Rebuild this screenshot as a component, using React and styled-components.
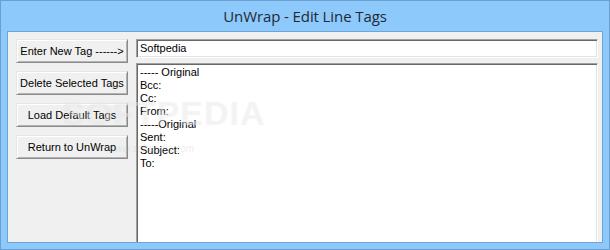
import React from "react";
import styled, { createGlobalStyle } from "styled-components";

const Global = createGlobalStyle`
  html, body { margin: 0; padding: 0; background: #8cc8f9; }
  * { box-sizing: border-box; }
`;

const Window = styled.div`
  width: 610px;
  height: 250px;
  border: 1px solid #6b9fd1;
  background: #8dc9fa;
  display: flex;
  flex-direction: column;
  padding: 0 6px 6px 6px;
`;

const TitleBar = styled.div`
  height: 30px;
  display: flex;
  align-items: center;
  justify-content: center;
  font-family: "Open Sans", "Noto Sans", sans-serif;
  font-size: 15px;
  color: #1f2a36;
  padding-bottom: 1px;
  letter-spacing: -0.1px;
`;

const Client = styled.div`
  position: relative;
  flex: 1;
  border: 1px solid #6ea4d8;
  background: #f0f0f0;
  display: flex;
  gap: 8px;
  padding: 7px 4px 0 8px;
  overflow: hidden;
  font-family: "Liberation Sans", Arial, sans-serif;
  font-size: 11px;
  color: #000;
`;

const ButtonColumn = styled.div`
  width: 112px;
  display: flex;
  flex-direction: column;
  gap: 8px;
`;

const Button = styled.div`
  height: 24px;
  display: flex;
  align-items: center;
  justify-content: center;
  background: #f0f0f0;
  border: 1px solid;
  border-color: #e6e6e6 #8a8a8a #8a8a8a #e6e6e6;
  box-shadow: inset 1px 1px 0 #ffffff, inset -1px -1px 0 #b4b4b4;
  white-space: nowrap;
  padding-bottom: 1px;
`;

const EditColumn = styled.div`
  flex: 1;
  display: flex;
  flex-direction: column;
  gap: 5px;
`;

const Sunken = styled.div`
  background: #fff;
  border: 1px solid;
  border-color: #a0a0a0 #ffffff #ffffff #a0a0a0;
  box-shadow: inset 1px 1px 0 #696969, inset -1px 0 0 #e3e3e3;
`;

const Input = styled(Sunken)`
  height: 19px;
  padding: 2px 3px 0 3px;
  line-height: 13px;
  box-shadow: inset 1px 1px 0 #696969, inset -1px -1px 0 #e3e3e3;
`;

const List = styled(Sunken)`
  flex: 1;
  border-bottom: none;
  padding: 2px 3px 0 3px;
  line-height: 13px;
`;

const Line = styled.div`
  white-space: pre;
`;

const Watermark = styled.div`
  position: absolute;
  left: 54px;
  top: 62px;
  font-family: "Liberation Sans", Arial, sans-serif;
  font-weight: bold;
  font-size: 34px;
  letter-spacing: 1px;
  color: rgba(255, 255, 255, 0.35);
  text-shadow: 0 0 1px rgba(160, 160, 160, 0.18);
  pointer-events: none;
`;

const WatermarkUrl = styled.div`
  position: absolute;
  left: 100px;
  top: 111px;
  font-family: "Liberation Sans", Arial, sans-serif;
  font-size: 10px;
  font-style: italic;
  color: rgba(170, 170, 170, 0.22);
  pointer-events: none;
`;

const buttons = [
  "Enter New Tag ------>",
  "Delete Selected Tags",
  "Load Default Tags",
  "Return to UnWrap",
];

const tags = [
  "----- Original",
  "Bcc:",
  "Cc:",
  "From:",
  "-----Original",
  "Sent:",
  "Subject:",
  "To:",
];

export default function App() {
  return (
    <>
      <Global />
      <Window>
        <TitleBar>UnWrap - Edit Line Tags</TitleBar>
        <Client>
          <ButtonColumn>
            {buttons.map((b) => (
              <Button key={b}>{b}</Button>
            ))}
          </ButtonColumn>
          <EditColumn>
            <Input>Softpedia</Input>
            <List>
              {tags.map((t, i) => (
                <Line key={i}>{t}</Line>
              ))}
            </List>
          </EditColumn>
          <Watermark>SOFTPEDIA</Watermark>
          <WatermarkUrl>www.softpedia.com</WatermarkUrl>
        </Client>
      </Window>
    </>
  );
}
